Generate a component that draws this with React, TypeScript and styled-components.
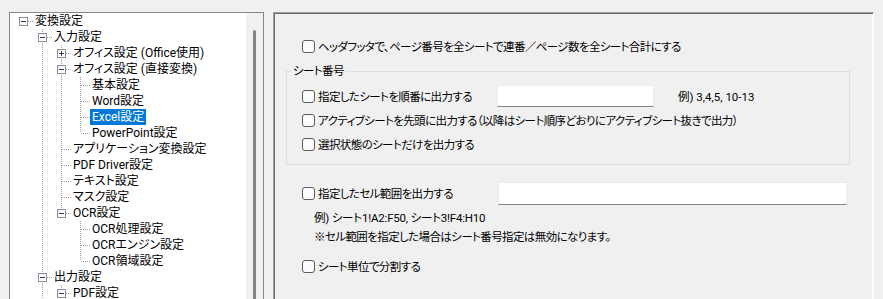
import React from 'react';
import styled, { createGlobalStyle } from 'styled-components';

const GlobalStyle = createGlobalStyle`
  html, body {
    margin: 0;
    padding: 0;
    background: #f0f0f0;
  }
  body {
    font-family: Roboto, 'Noto Sans CJK JP', sans-serif;
    font-size: 12px;
    color: #000;
    font-feature-settings: 'palt';
    overflow: hidden;
  }
`;

// Layout
const Window = styled.div`
  display: flex;
  align-items: flex-start;
  gap: 9px;
  height: 299px;
  padding: 12px 0 0 9px;
  box-sizing: border-box;
  overflow: hidden;
`;

// Tree
const TreePanel = styled.div`
  display: flex;
  flex: none;
  width: 255px;
  height: 300px;
  box-sizing: border-box;
  border: 1px solid #828790;
  border-bottom: none;
`;

const TreeBody = styled.ul`
  flex: 1;
  margin: 0;
  padding: 0 0 0 4px;
  list-style: none;
  background: #fff;
  overflow: hidden;
`;

const ScrollTrack = styled.div`
  flex: none;
  width: 17px;
  padding-top: 17px;
  box-sizing: border-box;
  background: #f0f0f0;
`;

const ScrollThumb = styled.div`
  width: 3px;
  height: 100%;
  margin-left: 7px;
  background: #858585;
  border-radius: 2px;
`;

const TreeRow = styled.li`
  display: flex;
  align-items: center;
  height: 16px;
  white-space: nowrap;
`;

const Cell = styled.svg`
  display: block;
  flex: none;
`;

const NodeLabel = styled.span<{ $selected?: boolean }>`
  line-height: 16px;
  padding: 0 2px;
  background: ${(p) => (p.$selected ? '#0078d7' : 'transparent')};
  color: ${(p) => (p.$selected ? '#fff' : '#000')};
`;

// Settings
const SettingsPanel = styled.div`
  flex: none;
  display: flex;
  flex-direction: column;
  align-items: flex-start;
  width: 601px;
  height: 300px;
  box-sizing: border-box;
  padding: 23px 0 0 12px;
  border-top: 1px solid #a0a0a0;
  border-left: 1px solid #a0a0a0;
  border-right: 1px solid #fff;
  box-shadow: inset 1px 1px 0 #696969, inset -1px 0 0 #fbfbfb;
  font-size: 11.5px;
  letter-spacing: -0.6px;
`;

const Row = styled.div<{ $indent?: number; $top?: number; $height?: number }>`
  display: flex;
  align-items: center;
  height: ${(p) => p.$height ?? 24}px;
  margin-left: ${(p) => p.$indent ?? 0}px;
  margin-top: ${(p) => p.$top ?? 0}px;
  white-space: nowrap;
`;

const CheckItem = styled.label<{ $width?: number }>`
  display: flex;
  align-items: center;
  gap: 3px;
  width: ${(p) => (p.$width ? `${p.$width}px` : 'auto')};
  flex: none;
`;

const Check = styled.input.attrs({ type: 'checkbox' })`
  appearance: none;
  width: 13px;
  height: 13px;
  margin: 0;
  box-sizing: border-box;
  border: 1px solid #5c5c5c;
  border-radius: 3px;
  background: #fbfbfb;
`;

const Group = styled.fieldset`
  width: 564px;
  min-width: 0;
  box-sizing: border-box;
  margin: 7px 0 0 0;
  padding: 5px 0 8px 0;
  border: 1px solid #dcdcdc;
`;

const Legend = styled.legend`
  margin-left: 4px;
  padding: 0 2px;
  line-height: 16px;
`;

const TextBox = styled.input.attrs({ type: 'text' })<{ $width: number; $height: number }>`
  width: ${(p) => p.$width}px;
  height: ${(p) => p.$height}px;
  box-sizing: border-box;
  margin: 0;
  padding: 0 4px;
  background: #fff;
  border: 1px solid #ececec;
  border-bottom-color: #868686;
  outline: none;
  font: inherit;
`;

const Hint = styled.span`
  margin-left: 24px;
  letter-spacing: 0;
`;

const Note = styled.div<{ $top?: number; $spacing?: number }>`
  margin: ${(p) => p.$top ?? 0}px 0 0 28px;
  line-height: 19px;
  white-space: nowrap;
  letter-spacing: ${(p) => p.$spacing ?? -0.6}px;
`;

type Node = {
  label: string;
  level: number;
  expander?: 'plus' | 'minus';
  selected?: boolean;
  more?: boolean;
};

const nodes: Node[] = [
  { label: '変換設定', level: 0, expander: 'minus' },
  { label: '入力設定', level: 1, expander: 'minus' },
  { label: 'オフィス設定 (Office使用)', level: 2, expander: 'plus' },
  { label: 'オフィス設定 (直接変換)', level: 2, expander: 'minus' },
  { label: '基本設定', level: 3 },
  { label: 'Word設定', level: 3 },
  { label: 'Excel設定', level: 3, selected: true },
  { label: 'PowerPoint設定', level: 3 },
  { label: 'アプリケーション変換設定', level: 2 },
  { label: 'PDF Driver設定', level: 2 },
  { label: 'テキスト設定', level: 2 },
  { label: 'マスク設定', level: 2 },
  { label: 'OCR設定', level: 2, expander: 'minus' },
  { label: 'OCR処理設定', level: 3 },
  { label: 'OCRエンジン設定', level: 3 },
  { label: 'OCR領域設定', level: 3 },
  { label: '出力設定', level: 1, expander: 'minus', more: true },
  { label: 'PDF設定', level: 2, expander: 'minus', more: true },
];

const hasNextSibling = (i: number) => {
  const n = nodes[i];
  if (n.more) return true;
  for (let j = i + 1; j < nodes.length; j++) {
    if (nodes[j].level < n.level) return false;
    if (nodes[j].level === n.level) return true;
  }
  return false;
};

const DOT = '#a0a0a0';

const Guide: React.FC<{ line: boolean }> = ({ line }) => (
  <Cell width={19} height={16} shapeRendering="crispEdges">
    {line && <line x1={9.5} y1={0} x2={9.5} y2={16} stroke={DOT} strokeDasharray="1 1" />}
  </Cell>
);

const Connector: React.FC<{ node: Node; next: boolean }> = ({ node, next }) => (
  <Cell width={19} height={16} shapeRendering="crispEdges">
    {node.level > 0 && <line x1={9.5} y1={0} x2={9.5} y2={8} stroke={DOT} strokeDasharray="1 1" />}
    {next && <line x1={9.5} y1={8} x2={9.5} y2={16} stroke={DOT} strokeDasharray="1 1" />}
    <line x1={10} y1={8.5} x2={19} y2={8.5} stroke={DOT} strokeDasharray="1 1" />
    {node.expander && (
      <>
        <rect x={5.5} y={4.5} width={8} height={8} fill="#fdfdfd" stroke="#8f8f8f" />
        <line x1={7} y1={8.5} x2={12} y2={8.5} stroke="#283a6e" />
        {node.expander === 'plus' && <line x1={9.5} y1={6} x2={9.5} y2={11} stroke="#283a6e" />}
      </>
    )}
  </Cell>
);

const Tree: React.FC = () => {
  const lastAt: number[] = [];
  return (
    <TreeBody>
      {nodes.map((n, i) => {
        lastAt[n.level] = i;
        const guides = [];
        for (let k = 0; k < n.level; k++) {
          const line = k > 0 && hasNextSibling(lastAt[k]);
          guides.push(<Guide key={k} line={line} />);
        }
        return (
          <TreeRow key={i}>
            {guides}
            <Connector node={n} next={hasNextSibling(i)} />
            <NodeLabel $selected={n.selected}>{n.label}</NodeLabel>
          </TreeRow>
        );
      })}
    </TreeBody>
  );
};

const Checkbox: React.FC<{ label: string; width?: number }> = ({ label, width }) => (
  <CheckItem $width={width}>
    <Check />
    <span>{label}</span>
  </CheckItem>
);

const App: React.FC = () => (
  <>
    <GlobalStyle />
    <Window>
      <TreePanel>
        <Tree />
        <ScrollTrack>
          <ScrollThumb />
        </ScrollTrack>
      </TreePanel>

      <SettingsPanel>
        <Row $indent={16} $height={20}>
          <Checkbox label="ヘッダフッタで、ページ番号を全シートで連番／ページ数を全シート合計にする" />
        </Row>

        <Group>
          <Legend>シート番号</Legend>
          <Row $indent={15}>
            <Checkbox label="指定したシートを順番に出力する" width={195} />
            <TextBox $width={157} $height={22} />
            <Hint>例) 3,4,5, 10-13</Hint>
          </Row>
          <Row $indent={15}>
            <Checkbox label="アクティブシートを先頭に出力する（以降はシート順序どおりにアクティブシート抜きで出力）" />
          </Row>
          <Row $indent={15}>
            <Checkbox label="選択状態のシートだけを出力する" />
          </Row>
        </Group>

        <Row $indent={16} $top={16}>
          <Checkbox label="指定したセル範囲を出力する" width={196} />
          <TextBox $width={349} $height={23} />
        </Row>
        <Note $top={4} $spacing={-0.2}>例) シート1!A2:F50, シート3!F4:H10</Note>
        <Note>※セル範囲を指定した場合はシート番号指定は無効になります。</Note>

        <Row $indent={16} $top={7}>
          <Checkbox label="シート単位で分割する" />
        </Row>
      </SettingsPanel>
    </Window>
  </>
);

export default App;
